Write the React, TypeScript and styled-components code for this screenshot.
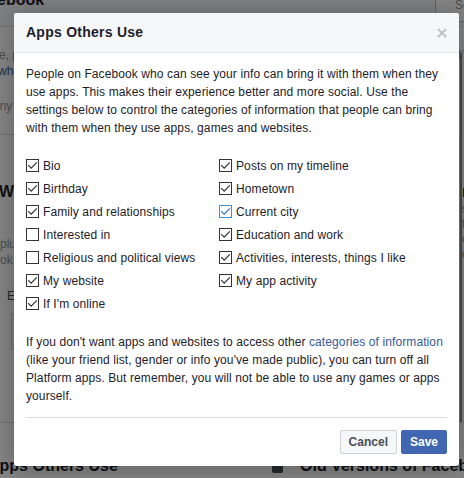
import styled, { createGlobalStyle } from 'styled-components';

const FONT = `"Liberation Sans", Arial, Helvetica, sans-serif`;

const GlobalStyle = createGlobalStyle`
  html, body {
    margin: 0;
    padding: 0;
  }
  body {
    font-family: ${FONT};
  }
`;

type Tone = 'dark' | 'muted' | 'light' | 'link';

const tones: Record<Tone, string> = {
  dark: '#1d2129',
  muted: '#4b4f56',
  light: '#90949c',
  link: '#365899',
};

interface Choice {
  label: string;
  checked: boolean;
  focused?: boolean;
}

const choices: Choice[] = [
  { label: 'Bio', checked: true },
  { label: 'Birthday', checked: true },
  { label: 'Family and relationships', checked: true },
  { label: 'Interested in', checked: false },
  { label: 'Religious and political views', checked: false },
  { label: 'My website', checked: true },
  { label: "If I'm online", checked: true },
  { label: 'Posts on my timeline', checked: true },
  { label: 'Hometown', checked: true },
  { label: 'Current city', checked: true, focused: true },
  { label: 'Education and work', checked: true },
  { label: 'Activities, interests, things I like', checked: true },
  { label: 'My app activity', checked: true },
];

function Checkbox({ checked, focused }: { checked: boolean; focused?: boolean }) {
  return (
    <Box $focused={focused}>
      {checked && (
        <svg width="11" height="11" viewBox="0 0 11 11">
          <path
            d="M1.2 5.2 L4.2 8.2 L9.8 2.4"
            fill="none"
            stroke={focused ? '#2a78c9' : '#333'}
            strokeWidth="1.2"
          />
        </svg>
      )}
    </Box>
  );
}

function App() {
  return (
    <>
      <GlobalStyle />
      <Screen>
        <Backdrop>
          <TopBar>
            <PageTitle>Apps on Facebook</PageTitle>
            <SearchBox>Search</SearchBox>
          </TopBar>
          <IntroCard>
            <FadedLine $shift={-52} $tone="light">
              Your name, profile picture, cover photo, gender, networks, username and user id are always public
            </FadedLine>
            <FadedLine $shift={-2} $tone="link">
              who can see your info and the apps they use on Facebook when they are logged in
            </FadedLine>
            <FadedLine $shift={-7} $tone="light" $top={19}>
              any time you use an app it can get your public info and your friends list
            </FadedLine>
          </IntroCard>
          <CardsRow>
            <SettingCard>
              <CardHeading $shift={-1}>Websites and Plugins</CardHeading>
              <FadedLine $tone="light" $top={34}>
                plugins, games and websites on Facebook and elsewhere.
              </FadedLine>
              <FadedLine $shift={-40} $tone="light">
                Facebook and elsewhere.
              </FadedLine>
              <FadedLine $shift={7} $tone="muted" $top={20}>
                Enabled
              </FadedLine>
              <EditBox>Edit</EditBox>
            </SettingCard>
            <SettingCard>
              <CardHeading>Game and App Notifications</CardHeading>
            </SettingCard>
            <Rail>
              <RailHeading>ri</RailHeading>
              <RailText>s</RailText>
              <RailText>fi</RailText>
              <RailText>o</RailText>
              <RailText>o</RailText>
            </Rail>
          </CardsRow>
          <BottomRow>
            <BottomHeading $shift={-12} $width={284}>
              Apps Others Use
            </BottomHeading>
            <PhoneIcon viewBox="0 0 11 11" width="11" height="11">
              <rect x="0" y="0" width="11" height="11" rx="2" fill="#4b4f56" />
            </PhoneIcon>
            <BottomHeading>Old Versions of Facebook for Mobile</BottomHeading>
          </BottomRow>
        </Backdrop>
        <Dim />
        <Dialog role="dialog" aria-labelledby="dialog-title">
          <Header>
            <Title id="dialog-title">Apps Others Use</Title>
            <CloseButton aria-label="Close">
              <svg width="10" height="10" viewBox="0 0 10 10">
                <path d="M1 1 L9 9 M9 1 L1 9" stroke="#bec2c9" strokeWidth="2" />
              </svg>
            </CloseButton>
          </Header>
          <Body>
            <Text>
              People on Facebook who can see your info can bring it with them when they
              use apps. This makes their experience better and more social. Use the
              settings below to control the categories of information that people can bring
              with them when they use apps, games and websites.
            </Text>
            <OptionGrid>
              {choices.map((c) => (
                <Option key={c.label}>
                  <Checkbox checked={c.checked} focused={c.focused} />
                  {c.label}
                </Option>
              ))}
            </OptionGrid>
            <Text>
              If you don't want apps and websites to access other{' '}
              <Link href="#">categories of information</Link> (like your friend list,
              gender or info you've made public), you can turn off all Platform apps. But
              remember, you will not be able to use any games or apps yourself.
            </Text>
          </Body>
          <Footer>
            <Button>Cancel</Button>
            <Button $primary>Save</Button>
          </Footer>
        </Dialog>
      </Screen>
    </>
  );
}

const Screen = styled.div`
  position: relative;
  width: 464px;
  height: 478px;
  overflow: hidden;
  background: #e9ebee;
  font-family: ${FONT};
`;

const Backdrop = styled.div`
  display: flex;
  flex-direction: column;
  height: 100%;
`;

const TopBar = styled.div`
  display: flex;
  align-items: flex-start;
  height: 27px;
  background: #f6f7f9;
  border-bottom: 1px solid #dddfe2;
  box-sizing: border-box;
  overflow: hidden;
`;

const PageTitle = styled.h1`
  margin: -10px 0 0 -99px;
  font-size: 16px;
  line-height: 20px;
  font-weight: bold;
  color: ${tones.dark};
  white-space: nowrap;
`;

const SearchBox = styled.div`
  margin: -4px 0 0 auto;
  width: 29px;
  height: 26px;
  padding-left: 19px;
  border: 1px solid #bdc1c9;
  border-right: 0;
  background: #fff;
  box-sizing: border-box;
  font-size: 12px;
  line-height: 16px;
  color: ${tones.light};
  overflow: hidden;
`;

const IntroCard = styled.div`
  height: 108px;
  padding-top: 20px;
  box-sizing: border-box;
  background: #fff;
  border-bottom: 1px solid #dddfe2;
  overflow: hidden;
`;

const FadedLine = styled.div<{ $shift?: number; $tone?: Tone; $top?: number }>`
  margin-left: ${(p) => p.$shift ?? 0}px;
  margin-top: ${(p) => p.$top ?? 0}px;
  font-size: 12px;
  line-height: 16px;
  color: ${(p) => tones[p.$tone ?? 'dark']};
  white-space: nowrap;
`;

const CardsRow = styled.div`
  display: flex;
  height: 288px;
  gap: 12px;
  border-bottom: 1px solid #dddfe2;
  box-sizing: border-box;
`;

const SettingCard = styled.div`
  width: 218px;
  flex: none;
  padding-top: 47px;
  background: #fff;
  overflow: hidden;
`;

const CardHeading = styled.h3<{ $shift?: number }>`
  margin: 0 0 0 ${(p) => p.$shift ?? 0}px;
  font-size: 16px;
  line-height: 20px;
  font-weight: bold;
  color: ${tones.dark};
  white-space: nowrap;
`;

const EditBox = styled.div`
  margin: 9px 0 0 11px;
  height: 37px;
  border: 1px solid #ccd0d5;
  border-radius: 3px;
  background: #f6f7f9;
  box-sizing: border-box;
  font-size: 12px;
  line-height: 35px;
  padding-left: 12px;
  color: ${tones.muted};
`;

const Rail = styled.div`
  margin-top: -82px;
  flex: 1;
  padding-top: 129px;
  border-left: 2px solid #8a8d91;
  background: #fff;
  overflow: hidden;
`;

const RailHeading = styled.div`
  font-size: 16px;
  line-height: 20px;
  font-weight: bold;
  color: ${tones.dark};
`;

const RailText = styled.div`
  font-size: 12px;
  line-height: 15px;
  color: ${tones.light};
  &:first-of-type {
    margin-top: 33px;
  }
`;

const BottomRow = styled.div`
  display: flex;
  align-items: center;
  flex: 1;
  padding-top: 30px;
  background: #fff;
`;

const BottomHeading = styled.h3<{ $shift?: number; $width?: number }>`
  flex: none;
  width: ${(p) => (p.$width ? `${p.$width}px` : 'auto')};
  margin: 0 0 0 ${(p) => p.$shift ?? 0}px;
  font-size: 16px;
  line-height: 20px;
  font-weight: bold;
  color: ${tones.dark};
  white-space: nowrap;
`;

const PhoneIcon = styled.svg`
  flex: none;
  margin: 4px 17px 0 0;
`;

const Dim = styled.div`
  position: absolute;
  inset: 0;
  background: rgba(0, 0, 0, 0.48);
`;

const Dialog = styled.div`
  position: absolute;
  top: 13px;
  left: 14px;
  width: 445px;
  background: #fff;
  border-radius: 3px;
  box-shadow: 0 2px 26px rgba(0, 0, 0, 0.3);
  overflow: hidden;
  color: ${tones.dark};
  font-family: ${FONT};
`;

const Header = styled.div`
  display: flex;
  align-items: center;
  justify-content: space-between;
  padding: 10px 12px;
  background: #f6f7f9;
  border-bottom: 1px solid #e5e5e5;
`;

const Title = styled.h2`
  margin: 0;
  font-size: 14px;
  line-height: 19px;
  font-weight: bold;
  letter-spacing: 0.25px;
  color: ${tones.dark};
`;

const CloseButton = styled.button`
  display: flex;
  width: 10px;
  height: 10px;
  padding: 0;
  border: 0;
  background: none;
  cursor: pointer;
`;

const Body = styled.div`
  padding: 12px 12px 0;
`;

const Text = styled.p`
  margin: 0;
  font-size: 12px;
  line-height: 18px;
  letter-spacing: 0.1px;
  color: ${tones.dark};
`;

const Link = styled.a`
  color: ${tones.link};
  text-decoration: none;
`;

const OptionGrid = styled.div`
  display: grid;
  grid-template-columns: 193px 1fr;
  grid-template-rows: repeat(7, 23px);
  grid-auto-flow: column;
  margin: 17px 0 18px;
`;

const Option = styled.label`
  display: flex;
  align-items: center;
  font-size: 12px;
  line-height: 16px;
  letter-spacing: 0.1px;
  color: ${tones.dark};
  white-space: nowrap;
`;

const Box = styled.span<{ $focused?: boolean }>`
  display: inline-flex;
  flex: none;
  width: 13px;
  height: 13px;
  margin-right: 4px;
  border: 1px solid ${(p) => (p.$focused ? '#3c8fd9' : '#333')};
  background: #fff;
  box-sizing: border-box;
`;

const Footer = styled.div`
  display: flex;
  justify-content: flex-end;
  gap: 4px;
  margin: 12px 12px 0;
  padding: 12px 0;
  border-top: 1px solid #dddfe2;
`;

const Button = styled.button<{ $primary?: boolean }>`
  height: 24px;
  padding: 0 8px;
  border: 1px solid ${(p) => (p.$primary ? '#4267b2' : '#ced0d4')};
  border-radius: 2px;
  background: ${(p) => (p.$primary ? '#4267b2' : '#f6f7f9')};
  color: ${(p) => (p.$primary ? '#fff' : '#4b4f56')};
  font-family: ${FONT};
  font-size: 12px;
  font-weight: bold;
  line-height: 22px;
  cursor: pointer;
`;

export default App;
